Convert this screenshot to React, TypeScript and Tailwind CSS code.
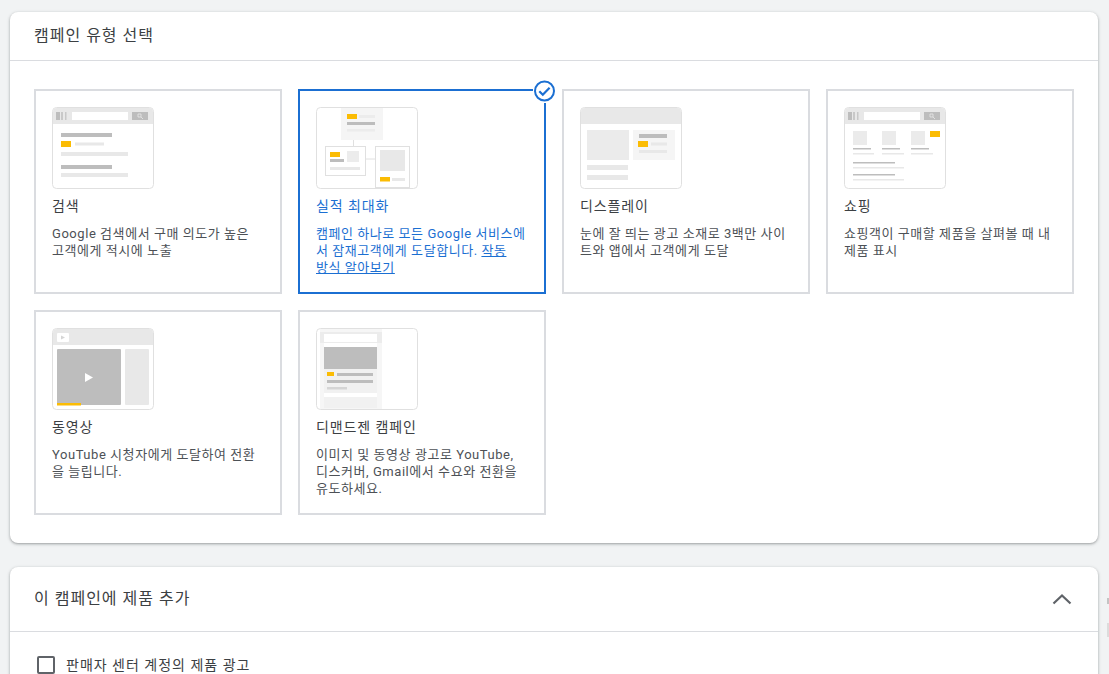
const FONT = "font-['Roboto','Noto_Sans_CJK_KR',sans-serif]";

function Thumb({ children }: { children: React.ReactNode }) {
  return (
    <svg width="102" height="82" viewBox="0 0 102 82" className="block shrink-0">
      <rect x="0.5" y="0.5" width="101" height="81" rx="4" fill="#fff" stroke="#e0e0e0" />
      {children}
    </svg>
  );
}

function BrowserBar() {
  return (
    <>
      <path d="M1 5a4 4 0 0 1 4-4h92a4 4 0 0 1 4 4v12H1z" fill="#e8e8e8" />
      <rect x="4" y="5" width="4" height="8" fill="#bdbdbd" />
      <rect x="9" y="5" width="2" height="8" fill="#c8c8c8" />
      <rect x="13" y="5" width="1.5" height="8" fill="#c8c8c8" />
      <rect x="20" y="5" width="56" height="8" fill="#fff" />
      <rect x="80" y="5" width="16" height="8" fill="#bdbdbd" />
      <path d="M86 7h3v3h-3zM89 10l2 2" fill="none" stroke="#e8e8e8" strokeWidth="0.8" />
    </>
  );
}

function SearchThumb() {
  return (
    <Thumb>
      <BrowserBar />
      <rect x="9" y="26" width="51" height="4" fill="#bdbdbd" />
      <rect x="9" y="34" width="10" height="6" fill="#fbbc04" />
      <rect x="23" y="35.500" width="29" height="3" fill="#e8e8e8" />
      <rect x="9" y="45" width="67" height="4" fill="#e8e8e8" />
      <rect x="9" y="58" width="51" height="4" fill="#bdbdbd" />
      <rect x="9" y="66" width="67" height="4" fill="#e8e8e8" />
    </Thumb>
  );
}

function PmaxThumb() {
  return (
    <Thumb>
      <rect x="25" y="1" width="42" height="32" fill="#f5f5f5" />
      <rect x="31" y="7" width="10" height="5" fill="#fbbc04" />
      <rect x="43" y="8" width="16" height="3" fill="#ececec" />
      <rect x="31" y="15" width="28" height="3" fill="#bdbdbd" />
      <rect x="31" y="22" width="28" height="2.500" fill="#ececec" />
      <path d="M37.500 33v6M50 52h10" stroke="#e0e0e0" fill="none" />
      <rect x="9.500" y="39.500" width="40" height="29" fill="#fff" stroke="#e0e0e0" />
      <rect x="14" y="45" width="10" height="5" fill="#fbbc04" />
      <rect x="31" y="44" width="12" height="11" fill="#ececec" />
      <rect x="14" y="52" width="14" height="3" fill="#bdbdbd" />
      <rect x="14" y="60" width="30" height="3" fill="#e8e8e8" />
      <rect x="59.500" y="39.500" width="34" height="41" fill="#fff" stroke="#e0e0e0" />
      <rect x="64" y="43" width="25" height="21" fill="#e8e8e8" />
      <rect x="64" y="70" width="10" height="4.500" fill="#fbbc04" />
      <rect x="76" y="71" width="13" height="3" fill="#e8e8e8" />
    </Thumb>
  );
}

function DisplayThumb() {
  return (
    <Thumb>
      <path d="M1 5a4 4 0 0 1 4-4h92a4 4 0 0 1 4 4v12H1z" fill="#e8e8e8" />
      <rect x="7" y="23" width="42" height="30" fill="#ebebeb" />
      <rect x="53" y="23" width="42" height="30" fill="#f5f5f5" />
      <rect x="59" y="27" width="28" height="4" fill="#bdbdbd" />
      <rect x="58" y="34" width="10" height="6" fill="#fbbc04" />
      <rect x="71" y="35.500" width="16" height="3" fill="#e8e8e8" />
      <rect x="59" y="43" width="28" height="3" fill="#e8e8e8" />
      <rect x="7" y="58" width="41" height="5" fill="#e8e8e8" />
      <rect x="7" y="68" width="41" height="5" fill="#e8e8e8" />
    </Thumb>
  );
}

function ShoppingThumb() {
  return (
    <Thumb>
      <BrowserBar />
      <rect x="9" y="24" width="14" height="14" fill="#ebebeb" />
      <rect x="38" y="24" width="14" height="14" fill="#ebebeb" />
      <rect x="67" y="24" width="14" height="14" fill="#ebebeb" />
      <rect x="86" y="24" width="10" height="6" fill="#fbbc04" />
      <rect x="9" y="41" width="18" height="1.500" fill="#bdbdbd" />
      <rect x="38" y="41" width="18" height="1.500" fill="#bdbdbd" />
      <rect x="67" y="41" width="18" height="1.500" fill="#bdbdbd" />
      <rect x="9" y="46" width="21" height="1.500" fill="#e8e8e8" />
      <rect x="38" y="46" width="22" height="1.500" fill="#e8e8e8" />
      <rect x="67" y="46" width="22" height="1.500" fill="#e8e8e8" />
      <rect x="9" y="55" width="42" height="1.500" fill="#bdbdbd" />
      <rect x="9" y="60" width="51" height="1.500" fill="#e8e8e8" />
      <rect x="9" y="67" width="42" height="1.500" fill="#bdbdbd" />
      <rect x="9" y="72" width="51" height="1.500" fill="#e8e8e8" />
    </Thumb>
  );
}

function VideoThumb() {
  return (
    <Thumb>
      <path d="M1 5a4 4 0 0 1 4-4h92a4 4 0 0 1 4 4v12H1z" fill="#e8e8e8" />
      <rect x="5" y="5" width="12" height="9" rx="1" fill="#fff" />
      <path d="M9 7.500l4 2-4 2z" fill="#d5d5d5" />
      <rect x="5" y="21" width="64" height="56" rx="1" fill="#bdbdbd" />
      <path d="M33 45l8 4.500-8 4.500z" fill="#fff" />
      <rect x="5" y="75" width="24" height="2.500" fill="#fbbc04" />
      <rect x="73" y="21" width="24" height="56" rx="1" fill="#e8e8e8" />
    </Thumb>
  );
}

function DemandGenThumb() {
  return (
    <Thumb>
      <rect x="4" y="1" width="62" height="80" fill="#f6f6f6" />
      <rect x="4" y="4" width="62" height="11" fill="#ececec" />
      <rect x="8" y="6" width="53" height="8" fill="#fff" />
      <rect x="8" y="15" width="53" height="4" fill="#fff" />
      <rect x="8" y="19" width="53" height="22" fill="#bdbdbd" />
      <rect x="8" y="41" width="53" height="24" fill="#f1f1f1" />
      <rect x="11" y="44" width="7" height="4" fill="#fbbc04" />
      <rect x="21" y="45" width="36" height="3" fill="#bdbdbd" />
      <rect x="11" y="52" width="46" height="3" fill="#bdbdbd" />
      <rect x="11" y="59" width="20" height="2.500" fill="#d5d5d5" />
      <rect x="8" y="65" width="53" height="4" fill="#fff" />
      <rect x="8" y="69" width="53" height="11" fill="#f1f1f1" />
    </Thumb>
  );
}

type CardData = {
  title: string;
  desc: React.ReactNode;
  thumb: React.ReactNode;
  selected?: boolean;
};

const CARDS: CardData[] = [
  { title: '검색', desc: 'Google 검색에서 구매 의도가 높은 고객에게 적시에 노출', thumb: <SearchThumb /> },
  {
    title: '실적 최대화',
    desc: (
      <>
        캠페인 하나로 모든 Google 서비스에서 잠재고객에게 도달합니다. <span className="break-keep underline">작동 방식 알아보기</span>
      </>
    ),
    thumb: <PmaxThumb />,
    selected: true,
  },
  { title: '디스플레이', desc: '눈에 잘 띄는 광고 소재로 3백만 사이트와 앱에서 고객에게 도달', thumb: <DisplayThumb /> },
  { title: '쇼핑', desc: '쇼핑객이 구매할 제품을 살펴볼 때 내 제품 표시', thumb: <ShoppingThumb /> },
  { title: '동영상', desc: 'YouTube 시청자에게 도달하여 전환을 늘립니다.', thumb: <VideoThumb /> },
  { title: '디맨드젠 캠페인', desc: '이미지 및 동영상 광고로 YouTube, 디스커버, Gmail에서 수요와 전환을 유도하세요.', thumb: <DemandGenThumb /> },
];

function TypeCard({ title, desc, thumb, selected }: CardData) {
  return (
    <div className={`relative h-[205px] border-2 px-4 pt-4 ${selected ? 'border-[#1b6fd2]' : 'border-[#dadce0]'}`}>
      {thumb}
      <p className={`mt-[7px] text-[14px] leading-[20px] tracking-[0.9px] ${selected ? 'text-[#1b6fd2]' : 'text-[#3c4043]'}`}>{title}</p>
      <p className={`mt-[9px] break-all text-[13px] leading-[17px] tracking-[0.55px] ${selected ? 'text-[#1b6fd2]' : 'text-[#4d5156]'}`}>{desc}</p>
      {selected && (
        <div className="absolute -right-[13px] -top-[12px] bg-white">
          <svg width="24" height="24" viewBox="0 0 24 24" className="block">
            <circle cx="11.500" cy="12" r="9.500" fill="#fff" stroke="#1b6fd2" strokeWidth="2" />
            <path d="M6.300 12.300l3.500 3.500 6.800-7" fill="none" stroke="#1b6fd2" strokeWidth="2.200" />
          </svg>
        </div>
      )}
    </div>
  );
}

export default function App() {
  return (
    <div className={`${FONT} relative h-[674px] overflow-hidden bg-[#f1f3f4] pl-[10px] pr-[11px] pt-3`}>
      <section className="h-[531px] rounded-lg bg-white shadow-[0_1px_2px_rgba(60,64,67,0.3),0_1px_3px_1px_rgba(60,64,67,0.15)]">
        <h2 className="flex h-[49px] items-center border-b border-[#dadce0] px-6 text-[16px] font-normal tracking-[1px] text-[#3c4043]">
          캠페인 유형 선택
        </h2>
        <div className="grid grid-cols-[repeat(4,248px)] gap-4 px-6 pt-7">
          {CARDS.map((c) => (
            <TypeCard key={c.title} {...c} />
          ))}
        </div>
      </section>

      <section className="mt-6 h-[200px] rounded-lg bg-white shadow-[0_1px_2px_rgba(60,64,67,0.3),0_1px_3px_1px_rgba(60,64,67,0.15)]">
        <div className="flex h-[65px] items-center justify-between border-b border-[#dadce0] pl-6 pr-[24px]">
          <h2 className="text-[16px] font-normal tracking-[1px] text-[#3c4043]">이 캠페인에 제품 추가</h2>
          <svg width="24" height="24" viewBox="0 0 24 24" className="block">
            <path d="M3.500 16.500l8.500-8 8.500 8" fill="none" stroke="#5f6368" strokeWidth="2.200" />
          </svg>
        </div>
        <label className="flex items-center gap-[11px] pl-[27px] pt-[23px]">
          <span className="h-[18px] w-[18px] rounded-[2px] border-2 border-[#5f6368]" />
          <span className="text-[14px] leading-5 tracking-[1px] text-[#3c4043]">판매자 센터 계정의 제품 광고</span>
        </label>
      </section>

      {/* stray marks at the window edge */}
      <div className="absolute right-0 top-[598px] h-[6px] w-[2px] bg-[#c4c4c4]" />
      <div className="absolute right-0 top-[623px] h-[14px] w-[2px] bg-[#dcdcdc]" />
    </div>
  );
}
